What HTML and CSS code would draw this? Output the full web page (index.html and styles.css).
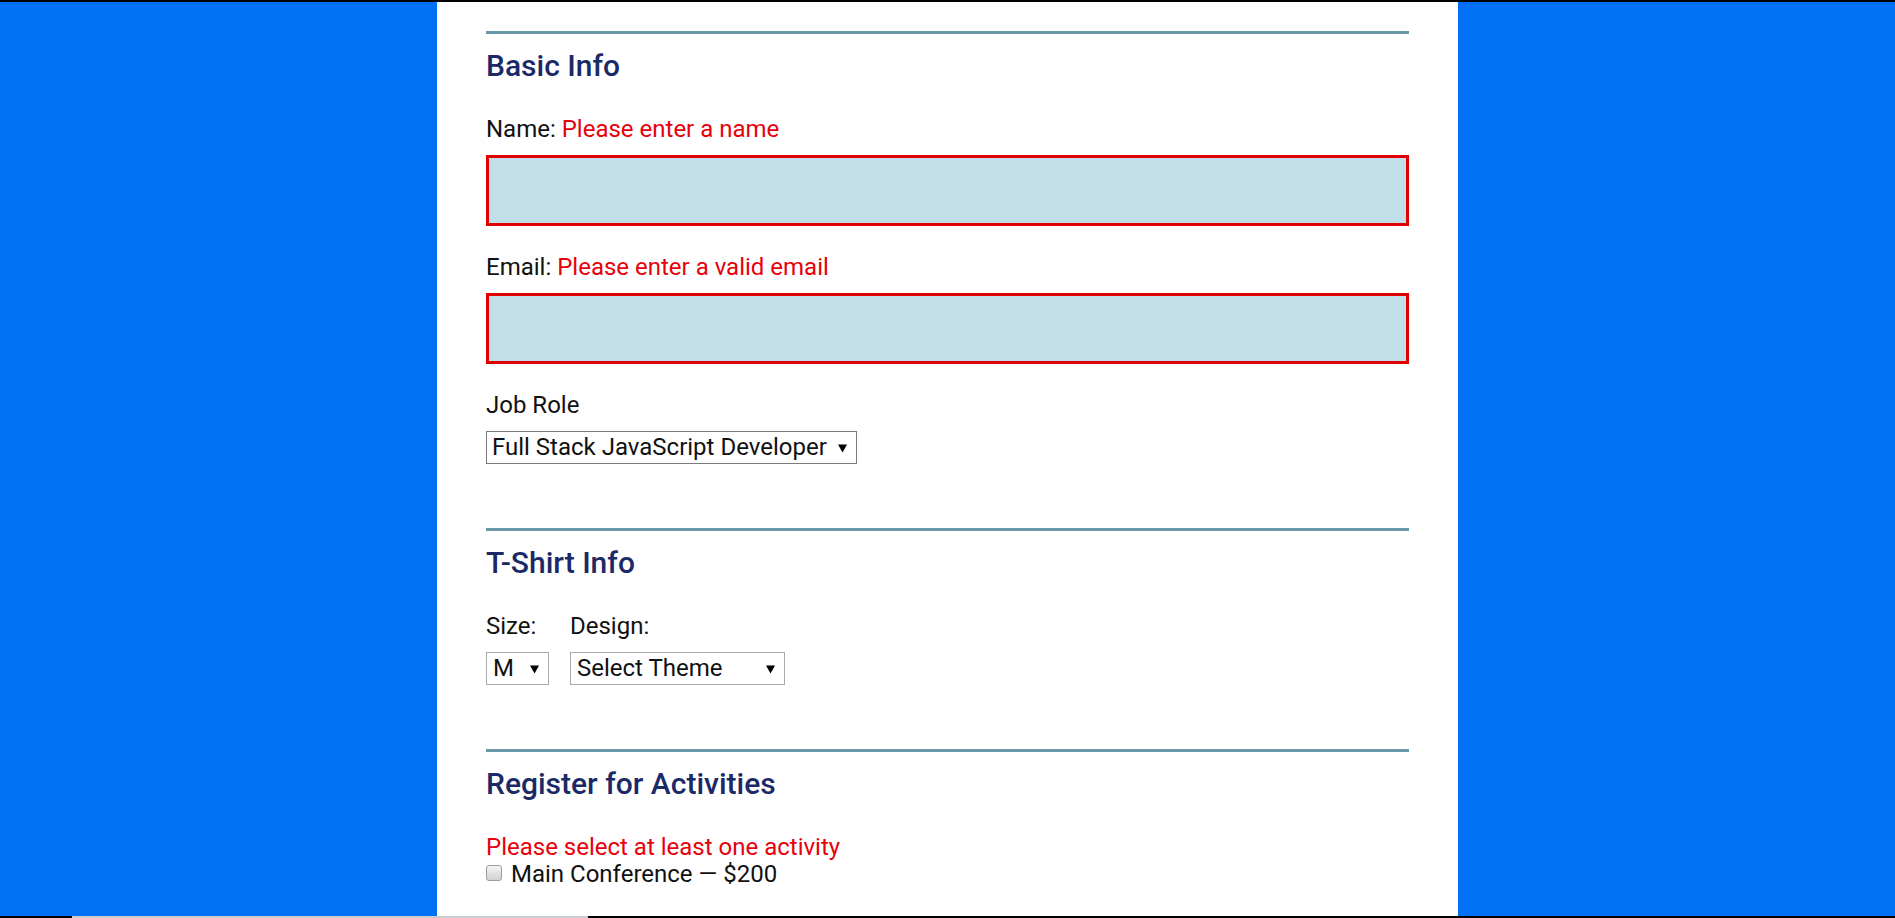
FILE: index.html
```html
<!DOCTYPE html>
<html lang="en">
<head>
<meta charset="utf-8">
<title>Conference Registration</title>
<link rel="stylesheet" href="styles.css">
</head>
<body>
<div class="topbar"></div>
<main class="page">
  <form class="form">
    <section class="section">
      <h2 class="section-title">Basic Info</h2>
      <label class="field-label" for="name">Name: <span class="error">Please enter a name</span></label>
      <input class="text-input" type="text" id="name">
      <label class="field-label" for="mail">Email: <span class="error">Please enter a valid email</span></label>
      <input class="text-input" type="email" id="mail">
      <label class="field-label" for="title">Job Role</label>
      <div class="select select-job">
        <select id="title" class="select-control">
          <option selected>Full Stack JavaScript Developer</option>
          <option>Front End Developer</option>
          <option>Back End Developer</option>
          <option>Designer</option>
          <option>Student</option>
          <option>Other</option>
        </select>
        <span class="select-arrow"><svg width="9" height="9" viewBox="0 0 9 9"><polygon points="0,0.5 9,0.5 4.5,8.5" fill="#000"/></svg></span>
      </div>
    </section>

    <section class="section">
      <h2 class="section-title">T-Shirt Info</h2>
      <div class="shirt-row">
        <div class="shirt-col">
          <label class="field-label" for="size">Size:</label>
          <div class="select select-size select-light">
            <select id="size" class="select-control">
              <option>S</option>
              <option selected>M</option>
              <option>L</option>
              <option>XL</option>
            </select>
            <span class="select-arrow"><svg width="9" height="9" viewBox="0 0 9 9"><polygon points="0,0.5 9,0.5 4.5,8.5" fill="#000"/></svg></span>
          </div>
        </div>
        <div class="shirt-col">
          <label class="field-label" for="design">Design:</label>
          <div class="select select-design select-light">
            <select id="design" class="select-control">
              <option selected>Select Theme</option>
              <option>Theme - JS Puns</option>
              <option>Theme - I ♥ JS</option>
            </select>
            <span class="select-arrow"><svg width="9" height="9" viewBox="0 0 9 9"><polygon points="0,0.5 9,0.5 4.5,8.5" fill="#000"/></svg></span>
          </div>
        </div>
      </div>
    </section>

    <section class="section activities">
      <h2 class="section-title">Register for Activities</h2>
      <p class="error activity-error">Please select at least one activity</p>
      <label class="activity">
        <input type="checkbox" class="check" name="all">
        <span>Main Conference — $200</span>
      </label>
    </section>
  </form>
</main>
<div class="taskbar-edge"></div>
</body>
</html>
```

FILE: styles.css
```css
html, body {
  margin: 0;
  height: 100%;
  overflow: hidden;
}

body {
  background: #0070f4;
  font-family: Roboto, "Noto Sans", Arial, sans-serif;
  color: #111;
}

.topbar {
  height: 2px;
  background: #000;
}

.page {
  width: 1021px;
  box-sizing: border-box;
  margin: 0 auto;
  padding: 29px 49px 0;
  background: #fff;
  min-height: calc(100vh - 2px);
}

.form {
  margin: 0;
}

.section {
  border-top: 3px solid #6899aa;
  padding-top: 14px;
  margin-bottom: 64px;
}

.section-title {
  margin: 0 0 33px;
  font-size: 30px;
  line-height: 35px;
  font-weight: 500;
  color: #1b2a66;
}

.field-label {
  display: block;
  font-size: 24px;
  line-height: 27px;
  margin-bottom: 12px;
}

.error {
  color: #e8000b;
}

.text-input {
  display: block;
  width: 100%;
  height: 71px;
  box-sizing: border-box;
  margin: 0 0 28px;
  padding: 0 10px;
  border: 3px solid #e00000;
  border-radius: 0;
  background: #c1dee9;
  font: inherit;
  outline: none;
}

.select {
  position: relative;
  display: inline-block;
  vertical-align: top;
}

.select-control {
  -webkit-appearance: none;
  appearance: none;
  display: block;
  box-sizing: border-box;
  height: 33px;
  margin: 0;
  padding: 0 20px 0 5px;
  border: 1px solid #7a7a7a;
  border-radius: 0;
  background: #fff;
  color: #111;
  font-family: Roboto, "Noto Sans", Arial, sans-serif;
  font-size: 24px;
  line-height: 31px;
  outline: none;
}

.select-light .select-control {
  border-color: #a9a9a9;
}

.select-job .select-control {
  width: 371px;
}

.select-size .select-control {
  width: 63px;
  padding-left: 6px;
}

.select-design .select-control {
  width: 215px;
  padding-left: 6px;
}

.select-arrow {
  position: absolute;
  right: 10px;
  top: 50%;
  transform: translateY(-45%);
  display: flex;
  pointer-events: none;
}

.shirt-row {
  display: flex;
  gap: 21px;
}

.activity-error {
  margin: 4px 0 0;
  font-size: 24px;
  line-height: 27px;
}

.activity {
  display: flex;
  align-items: flex-start;
  gap: 9px;
  font-size: 24px;
  line-height: 27px;
}

.check {
  -webkit-appearance: none;
  appearance: none;
  width: 16px;
  height: 16px;
  box-sizing: border-box;
  margin: 4px 0 0 0;
  border: 1px solid #9c9c9c;
  border-radius: 3px;
  background: linear-gradient(#f4f4f4, #d2d2d2);
  flex: none;
}

.taskbar-edge {
  position: fixed;
  left: 0;
  right: 0;
  bottom: 0;
  height: 2px;
  background: linear-gradient(to right, #000 0, #000 72px, #c9cdd2 72px, #c9cdd2 588px, #000 588px);
}
```
